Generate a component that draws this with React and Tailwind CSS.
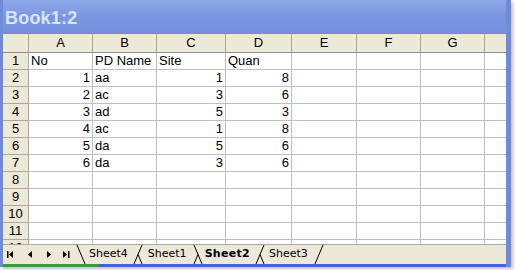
import React from 'react';

const colWidths = ['w-[64px]', 'w-[64px]', 'w-[69px]', 'w-[66px]', 'w-[65px]', 'w-[64px]', 'w-[64px]'];
const letters = ['A', 'B', 'C', 'D', 'E', 'F', 'G'];

// each cell: [text, align]
const rows = [
    [['No', 'l'], ['PD Name', 'l'], ['Site', 'l'], ['Quan', 'l']],
    [['1', 'r'], ['aa', 'l'], ['1', 'r'], ['8', 'r']],
    [['2', 'r'], ['ac', 'l'], ['3', 'r'], ['6', 'r']],
    [['3', 'r'], ['ad', 'l'], ['5', 'r'], ['3', 'r']],
    [['4', 'r'], ['ac', 'l'], ['1', 'r'], ['8', 'r']],
    [['5', 'r'], ['da', 'l'], ['5', 'r'], ['6', 'r']],
    [['6', 'r'], ['da', 'l'], ['3', 'r'], ['6', 'r']],
    [], [], [], [], [],
];

const HeaderRow = () => (
    <div className="flex h-[20px] shrink-0 border-t border-b border-[#8f8c80] bg-[#ece9d8] leading-[18px]">
        <div className="w-[26px] shrink-0 border-r border-[#aca899]" />
        {letters.map((l, i) => (
            <div key={l} className={`${colWidths[i]} shrink-0 border-r border-[#aca899] text-center`}>
                {l}
            </div>
        ))}
        <div className="flex-1" />
    </div>
);

const DataRow = ({ n, cells }) => (
    <div className="flex h-[17px] shrink-0 leading-[16px]">
        <div className="w-[26px] shrink-0 border-r border-b border-[#aca899] bg-[#ece9d8] text-center">
            {n}
        </div>
        {colWidths.map((w, i) => {
            const c = cells[i];
            return (
                <div
                    key={i}
                    className={`${w} shrink-0 border-r border-b border-[#c0c0c0] px-[2px] whitespace-nowrap overflow-hidden ${c && c[1] === 'r' ? 'text-right' : 'text-left'}`}
                >
                    {c ? c[0] : ''}
                </div>
            );
        })}
        <div className="flex-1 border-b border-[#c0c0c0]" />
    </div>
);

const Slant = ({ dir, extra }) => (
    <svg width="10" height="19" viewBox="0 0 10 19" className="shrink-0">
        {dir === 'back' ? (
            <line x1="1" y1="0" x2="9" y2="19" stroke="#000" strokeWidth="1" />
        ) : (
            <line x1="1" y1="19" x2="9" y2="0" stroke="#000" strokeWidth="1" />
        )}
        {extra === 'right' && <line x1="5" y1="9.5" x2="9" y2="19" stroke="#000" strokeWidth="1" />}
        {extra === 'left' && <line x1="5" y1="9.5" x2="1" y2="19" stroke="#000" strokeWidth="1" />}
    </svg>
);

const TabBar = () => (
    <div className="flex items-center h-[20px] shrink-0 border-t border-[#aca899] bg-[#ece9d8] font-['DejaVu_Sans',sans-serif] text-[11px] text-black">
        {/* first */}
        <svg width="7" height="7" viewBox="0 0 7 7" className="ml-[4px] shrink-0">
            <rect x="0" y="0" width="1.5" height="7" fill="#000" />
            <polygon points="2,3.5 6,0 6,7" fill="#000" />
        </svg>
        {/* prev */}
        <svg width="5" height="7" viewBox="0 0 5 7" className="ml-[14px] shrink-0">
            <polygon points="0,3.5 4,0 4,7" fill="#000" />
        </svg>
        {/* next */}
        <svg width="5" height="7" viewBox="0 0 5 7" className="ml-[13px] shrink-0">
            <polygon points="1,0 5,3.5 1,7" fill="#000" />
        </svg>
        {/* last */}
        <svg width="7" height="7" viewBox="0 0 7 7" className="ml-[12px] shrink-0">
            <polygon points="0,0 4,3.5 0,7" fill="#000" />
            <rect x="5" y="0" width="1.5" height="7" fill="#000" />
        </svg>

        <div className="ml-[6px] flex items-center">
            <Slant dir="back" />
            <span className="ml-[3px] mr-[5px]">Sheet4</span>
            <Slant dir="fwd" extra="right" />
            <span className="ml-[5px] mr-[6px]">Sheet1</span>
            <Slant dir="back" extra="left" />
            <span className="ml-[2px] mr-[5px] font-bold tracking-[0.3px]">Sheet2</span>
            <Slant dir="fwd" extra="right" />
            <span className="ml-[4px] mr-[6px]">Sheet3</span>
            <Slant dir="fwd" />
        </div>
    </div>
);

const App = () => {
    return (
        <div className="w-[515px] h-[270px] bg-white">
            <div className="w-[511px] h-[267px] flex flex-col border-l-[3px] border-r-[5px] border-[#6f8ad9] bg-[#7a96df] shadow-[2px_2px_3px_rgba(0,0,0,0.25)]">
                {/* Title bar */}
                <div className="h-[33px] shrink-0 flex items-center pl-[2px] pt-[3px] bg-gradient-to-b from-[#8ea8ea] via-[#7a96df] to-[#7590dc]">
                    <span className="font-['Liberation_Sans',sans-serif] font-bold text-[18px] text-[#d8e4f8] tracking-[0.2px]">
                        Book1:2
                    </span>
                </div>

                {/* Sheet grid */}
                <div className="flex-1 flex flex-col overflow-hidden bg-white font-['Liberation_Sans',sans-serif] text-[13px] text-black">
                    <HeaderRow />
                    {rows.map((cells, i) => (
                        <DataRow key={i} n={i + 1} cells={cells} />
                    ))}
                </div>

                <TabBar />

                {/* Bottom frame */}
                <div className="flex h-[3px] shrink-0">
                    <div className="w-[96px] bg-[#3c9a3c]" />
                    <div className="flex-1 bg-[#3d63d6]" />
                </div>
            </div>
        </div>
    );
};

export default App;
